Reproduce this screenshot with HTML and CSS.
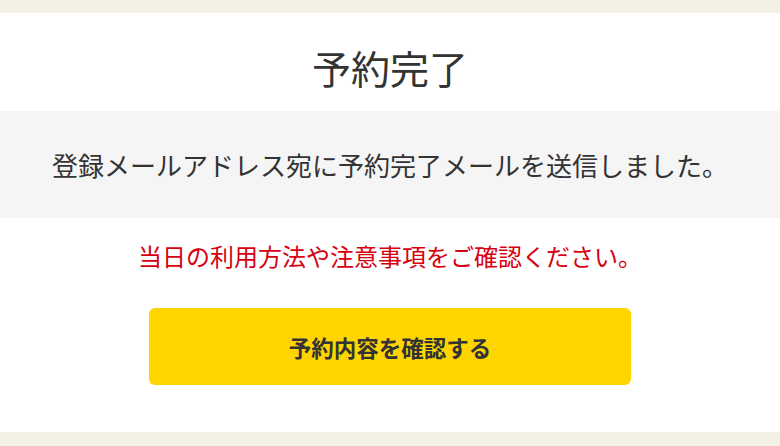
FILE: index.html
```html
<!DOCTYPE html>
<html lang="ja">
<head>
<meta charset="utf-8">
<link rel="stylesheet" href="styles.css">
</head>
<body>
<main class="card">
  <h1 class="title">予約完了</h1>
  <div class="message">登録メールアドレス宛に予約完了メールを送信しました。</div>
  <p class="notice">当日の利用方法や注意事項をご確認ください。</p>
  <div class="actions">
    <a class="btn" href="#">予約内容を確認する</a>
  </div>
</main>
</body>
</html>
```
FILE: styles.css
```css
html, body {
  margin: 0;
  padding: 0;
}
body {
  background: #f3f0e5;
  padding: 13px 0 14px;
  font-family: "Noto Sans CJK JP", "Noto Sans", sans-serif;
  color: #333;
}
.card {
  background: #fff;
  height: 419px;
  display: flex;
  flex-direction: column;
}
.title {
  margin: 0;
  height: 98px;
  display: flex;
  align-items: center;
  justify-content: center;
  font-size: 39px;
  font-weight: 400;
  color: #333;
  padding-top: 10px;
  box-sizing: border-box;
}
.message {
  background: #f5f5f5;
  height: 107px;
  display: flex;
  align-items: center;
  justify-content: center;
  font-size: 26px;
  color: #333;
}
.notice {
  margin: 0;
  height: 74px;
  display: flex;
  align-items: center;
  justify-content: center;
  font-size: 24px;
  color: #d7000f;
}
.actions {
  display: flex;
  justify-content: center;
  padding-top: 16px;
}
.btn {
  width: 482px;
  height: 77px;
  background: #ffd500;
  border-radius: 6px;
  display: flex;
  align-items: center;
  justify-content: center;
  font-size: 22.5px;
  font-weight: 700;
  color: #333;
  text-decoration: none;
}
```
